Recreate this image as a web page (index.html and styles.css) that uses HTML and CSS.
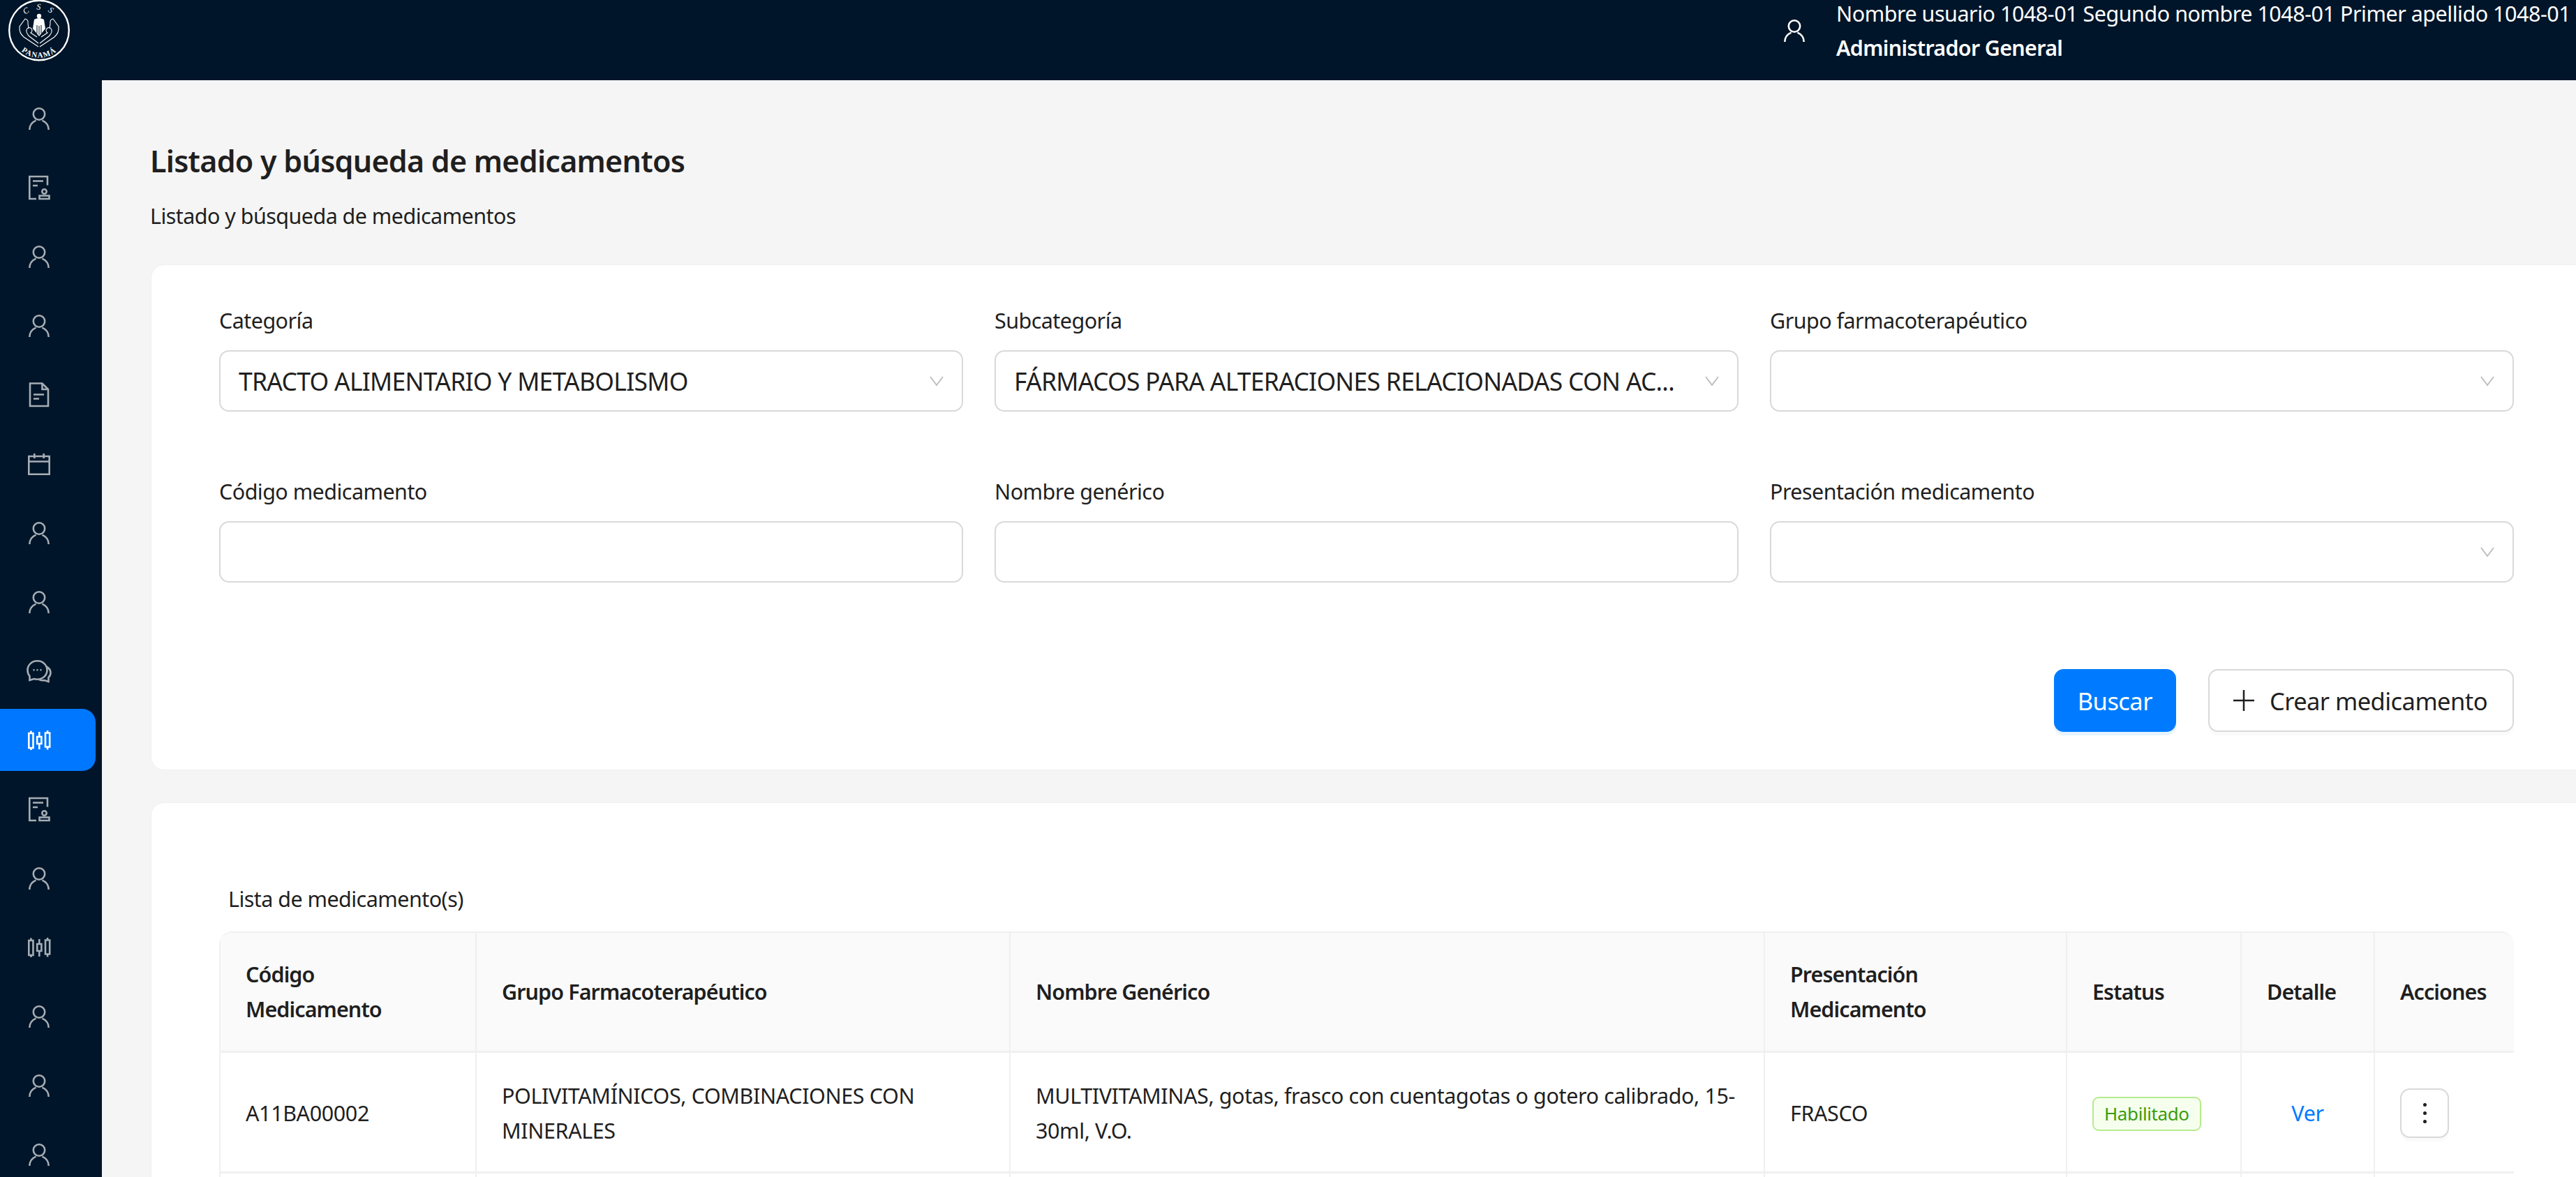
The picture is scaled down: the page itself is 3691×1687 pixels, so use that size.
FILE: index.html
```html
<!DOCTYPE html>
<html lang="es">
    <head>
        <meta charset="utf-8">
        <title>Listado y búsqueda de medicamentos</title>
        <link rel="stylesheet" href="styles.css">
    </head>
    <body>
        <svg class="icon-defs" aria-hidden="true">
            <symbol id="i-user" viewBox="0 0 36 36">
                <circle cx="18" cy="11.5" r="8.2"/>
                <path d="M4.3 34c0-6.4 3.8-11 9.2-13.4M31.7 34c0-6.4-3.8-11-9.2-13.4"/>
            </symbol>
            <symbol id="i-stamp" viewBox="0 0 36 36">
                <path d="M30 14.5V2H4.3v32H14M9 8.5h15M9 15h7"/>
                <circle cx="25.5" cy="23.5" r="3.2"/>
                <path d="M18.5 29.5h14V34h-14z"/>
            </symbol>
            <symbol id="i-doc" viewBox="0 0 36 36">
                <path d="M5 1.5h17.5L31 10v24H5zM22.5 1.5V10H31M10 17.5h15M10 23.5h8"/>
            </symbol>
            <symbol id="i-calendar" viewBox="0 0 36 36">
                <path d="M3.3 7h29.4v25.7H3.3zM3.3 14.5h29.4M11.3 3v7M24.7 3v7"/>
            </symbol>
            <symbol id="i-chat" viewBox="0 0 36 36">
                <path d="M4.5 31V25C2.5 22.7 1.5 19.8 1.5 16.5 1.5 9 7.7 3.3 15.5 3.3S29.5 9 29.5 16.5 23.3 29.7 15.5 29.7c-1.7 0-3.4-.3-5-.7z"/>
                <path d="M28.5 11.5c3.7 2 6 5 6 8.7 0 2.8-1 5-3 6.8v6l-6-2c-2.5.5-4.5.4-7-.7"/>
                <path class="dots" d="M9.5 16.3h2M14.5 16.3h2M19.5 16.3h2"/>
            </symbol>
            <symbol id="i-sliders" viewBox="0 0 36 36">
                <path d="M3.3 8h6.2v21H3.3zM6.4 4.5V8M6.4 29v3M15.2 13h6.2v10h-6.2zM18.3 6v7M18.3 23v8M27 7.5h6.2v20H27zM30.1 4v3.5M30.1 27.5v4"/>
            </symbol>
        </svg>

        <header class="topbar">
            <svg class="logo" viewBox="0 0 88 88" role="img" aria-label="CSS Panamá">
                <defs>
                    <path id="logo-top" d="M19 28A29 29 0 0 1 69 28"/>
                    <path id="logo-bottom" d="M7 56A39 39 0 0 0 81 56"/>
                </defs>
                <circle class="logo-ring" cx="44" cy="43.5" r="42.8"/>
                <text class="logo-css"><textPath href="#logo-top" startOffset="50%" text-anchor="middle">C S S</textPath></text>
                <text class="logo-pan"><textPath href="#logo-bottom" startOffset="50%" text-anchor="middle">PANAMÁ</textPath></text>
                <g class="logo-hand">
                    <path d="M43 67 22 53Q15 47 16 38L24 27Q29 28 28 34L29 41"/>
                    <path d="M43 62 30 52Q25 47 26 43A4 4 0 1 1 32 47L41 53"/>
                </g>
                <g class="logo-hand logo-hand-r">
                    <path d="M43 67 22 53Q15 47 16 38L24 27Q29 28 28 34L29 41"/>
                    <path d="M43 62 30 52Q25 47 26 43A4 4 0 1 1 32 47L41 53"/>
                </g>
                <circle class="logo-fam" cx="44" cy="23" r="3.2"/>
                <path class="logo-fam" d="M37 28Q44 24 51 28L53 41 44 52 35 41z"/>
                <path class="logo-cut" d="M41 36v12M44 37v13M47 36v12"/>
            </svg>
            <div class="user-box">
                <svg class="user-icon"><use href="#i-user"/></svg>
                <div class="user-text">
                    <div>Nombre usuario 1048-01 Segundo nombre 1048-01 Primer apellido 1048-01</div>
                    <div class="user-role">Administrador General</div>
                </div>
            </div>
        </header>

        <div class="layout">
            <nav class="sidebar">
                <a class="nav-item"><svg><use href="#i-user"/></svg></a>
                <a class="nav-item"><svg><use href="#i-stamp"/></svg></a>
                <a class="nav-item"><svg><use href="#i-user"/></svg></a>
                <a class="nav-item"><svg><use href="#i-user"/></svg></a>
                <a class="nav-item"><svg><use href="#i-doc"/></svg></a>
                <a class="nav-item"><svg><use href="#i-calendar"/></svg></a>
                <a class="nav-item"><svg><use href="#i-user"/></svg></a>
                <a class="nav-item"><svg><use href="#i-user"/></svg></a>
                <a class="nav-item"><svg><use href="#i-chat"/></svg></a>
                <a class="nav-item active"><svg><use href="#i-sliders"/></svg></a>
                <a class="nav-item"><svg><use href="#i-stamp"/></svg></a>
                <a class="nav-item"><svg><use href="#i-user"/></svg></a>
                <a class="nav-item"><svg><use href="#i-sliders"/></svg></a>
                <a class="nav-item"><svg><use href="#i-user"/></svg></a>
                <a class="nav-item"><svg><use href="#i-user"/></svg></a>
                <a class="nav-item"><svg><use href="#i-user"/></svg></a>
            </nav>

            <main class="page-content">
                <h1>Listado y búsqueda de medicamentos</h1>
                <p class="subtitle">Listado y búsqueda de medicamentos</p>

                <section class="card search-card">
                    <div class="form-grid">
                        <div class="field">
                            <label>Categoría</label>
                            <div class="select">
                                <span class="select-value">TRACTO ALIMENTARIO Y METABOLISMO</span>
                                <svg class="chevron" viewBox="0 0 20 14"><path d="M1 1l9 12 9-12"/></svg>
                            </div>
                        </div>
                        <div class="field">
                            <label>Subcategoría</label>
                            <div class="select">
                                <span class="select-value">FÁRMACOS PARA ALTERACIONES RELACIONADAS CON AC...</span>
                                <svg class="chevron" viewBox="0 0 20 14"><path d="M1 1l9 12 9-12"/></svg>
                            </div>
                        </div>
                        <div class="field">
                            <label>Grupo farmacoterapéutico</label>
                            <div class="select">
                                <span class="select-value"></span>
                                <svg class="chevron" viewBox="0 0 20 14"><path d="M1 1l9 12 9-12"/></svg>
                            </div>
                        </div>
                        <div class="field">
                            <label>Código medicamento</label>
                            <input type="text" class="text-input">
                        </div>
                        <div class="field">
                            <label>Nombre genérico</label>
                            <input type="text" class="text-input">
                        </div>
                        <div class="field">
                            <label>Presentación medicamento</label>
                            <div class="select">
                                <span class="select-value"></span>
                                <svg class="chevron" viewBox="0 0 20 14"><path d="M1 1l9 12 9-12"/></svg>
                            </div>
                        </div>
                    </div>
                    <div class="form-actions">
                        <button class="btn btn-primary">Buscar</button>
                        <button class="btn btn-default">
                            <svg class="plus" viewBox="0 0 30 30"><path d="M15 0v30M0 15h30"/></svg>
                            Crear medicamento
                        </button>
                    </div>
                </section>

                <section class="card list-card">
                    <h2>Lista de medicamento(s)</h2>
                    <div class="table-wrap">
                        <table>
                            <colgroup>
                                <col class="col-code">
                                <col class="col-group">
                                <col class="col-name">
                                <col class="col-pres">
                                <col class="col-status">
                                <col class="col-detail">
                                <col class="col-actions">
                            </colgroup>
                            <thead>
                                <tr>
                                    <th>Código Medicamento</th>
                                    <th>Grupo Farmacoterapéutico</th>
                                    <th>Nombre Genérico</th>
                                    <th>Presentación Medicamento</th>
                                    <th>Estatus</th>
                                    <th>Detalle</th>
                                    <th>Acciones</th>
                                </tr>
                            </thead>
                            <tbody>
                                <tr>
                                    <td>A11BA00002</td>
                                    <td>POLIVITAMÍNICOS, COMBINACIONES CON MINERALES</td>
                                    <td>MULTIVITAMINAS, gotas, frasco con cuentagotas o gotero calibrado, 15-30ml, V.O.</td>
                                    <td>FRASCO</td>
                                    <td><span class="tag">Habilitado</span></td>
                                    <td class="cell-center"><a class="link">Ver</a></td>
                                    <td>
                                        <button class="kebab" aria-label="Acciones"><i></i><i></i><i></i></button>
                                    </td>
                                </tr>
                                <tr class="next-row">
                                    <td></td><td></td><td></td><td></td><td></td><td></td><td></td>
                                </tr>
                            </tbody>
                        </table>
                    </div>
                </section>
            </main>
        </div>
    </body>
</html>
```

FILE: styles.css
```css
html, body {
    height: 1687px;
    overflow: hidden;
}

body {
    margin: 0;
    font-family: "Noto Sans", "Open Sans", sans-serif;
    font-size: 30.5px;
    letter-spacing: -0.018em;
    line-height: 50px;
    color: #1f1f1f;
    background-color: #f5f5f5;
}

.icon-defs {
    display: none;
}

/* shared look of the line icons */
symbol path, symbol circle {
    fill: none;
    stroke: currentColor;
    stroke-width: 2.6;
}

symbol .dots {
    stroke-width: 2.4;
}

.topbar {
    display: flex;
    align-items: flex-start;
    height: 115px;
    background-color: #001529;
    color: #fff;
}

.logo {
    flex: none;
    width: 88px;
    height: 88px;
    margin-left: 12px;
}

.logo-ring {
    fill: none;
    stroke: #fff;
    stroke-width: 2.4;
}

.logo-css {
    fill: #fff;
    font-family: "Liberation Serif", serif;
    font-size: 12px;
    font-style: italic;
    letter-spacing: 3.5px;
}

.logo-pan {
    fill: #fff;
    font-family: "Liberation Serif", serif;
    font-size: 11px;
    font-weight: bold;
    letter-spacing: 1.2px;
}

.logo-hand {
    fill: none;
    stroke: #fff;
    stroke-width: 1.1;
}

.logo-hand-r {
    transform: translateX(88px) scaleX(-1);
}

.logo-fam {
    fill: #fff;
}

.logo-cut {
    fill: none;
    stroke: #001529;
    stroke-width: 1;
}

.user-box {
    display: flex;
    align-items: center;
    flex: none;
    margin-left: 2453px;
    height: 87px;
}

.user-icon {
    flex: none;
    width: 36px;
    height: 36px;
    color: #fff;
}

.user-text {
    margin-left: 42px;
    white-space: nowrap;
    line-height: 49px;
    letter-spacing: -0.016em;
}

.user-role {
    font-weight: 600;
    letter-spacing: -0.023em;
}

.layout {
    display: flex;
    height: 1572px;
}

.sidebar {
    flex: none;
    display: flex;
    flex-direction: column;
    gap: 10px;
    width: 146px;
    padding-top: 10px;
    background-color: #001529;
    color: #a6adb4;
    box-sizing: border-box;
}

.nav-item {
    display: flex;
    align-items: center;
    justify-content: center;
    flex: none;
    width: 112px;
    height: 89px;
}

.nav-item svg {
    width: 36px;
    height: 36px;
}

.nav-item.active {
    width: 137px;
    padding-right: 25px;
    box-sizing: border-box;
    border-radius: 0 19px 19px 0;
    background-color: #0077ff;
    color: #fff;
}

.page-content {
    flex: none;
    width: 3486px;
    margin-left: 70px;
    padding-top: 84px;
}

h1 {
    margin: 0 0 0 -1px;
    font-size: 43px;
    font-weight: 600;
    letter-spacing: -0.0175em;
    line-height: 64px;
}

.subtitle {
    margin: 21px 0 45px -1px;
}

.card {
    background-color: #fff;
    border: 1px solid #f0f0f0;
    border-radius: 19px 0 0 19px;
    box-sizing: border-box;
    padding: 54px 99px 54px 97px;
}

.form-grid {
    display: grid;
    grid-template-columns: repeat(3, 1fr);
    column-gap: 45px;
    row-gap: 89px;
}

.field label {
    display: block;
    margin-bottom: 18px;
}

.select, .text-input {
    display: flex;
    align-items: center;
    width: 100%;
    height: 88px;
    padding: 0 26px;
    box-sizing: border-box;
    background-color: #fff;
    border: 2px solid #d9d9d9;
    border-radius: 14px;
    font-family: inherit;
    font-size: 35.5px;
    letter-spacing: -0.021em;
}

.select-value {
    flex: 1;
    min-width: 0;
    white-space: nowrap;
    overflow: hidden;
}

.chevron {
    flex: none;
    width: 20px;
    height: 14px;
    margin-left: 12px;
    fill: none;
    stroke: #bfbfbf;
    stroke-width: 2;
}

.form-actions {
    display: flex;
    justify-content: flex-end;
    gap: 46px;
    margin-top: 124px;
}

.btn {
    display: flex;
    align-items: center;
    height: 90px;
    padding: 0 34px;
    border-radius: 14px;
    font-family: inherit;
    font-size: 34.5px;
    letter-spacing: -0.016em;
    box-sizing: border-box;
}

.btn-primary {
    background-color: #007bff;
    border: none;
    color: #fff;
    box-shadow: 0 5px 0 #e6f4ff;
}

.btn-default {
    padding-right: 36px;
    background-color: #fff;
    border: 2px solid #d9d9d9;
    color: #1f1f1f;
    box-shadow: 0 5px 0 rgba(0, 0, 0, 0.02);
}

.plus {
    width: 30px;
    height: 30px;
    margin-right: 22px;
    fill: none;
    stroke: #1f1f1f;
    stroke-width: 2.5;
}

.list-card {
    margin-top: 46px;
    padding-top: 112px;
}

h2 {
    margin: 0 0 22px 13px;
    font-size: 30.5px;
    font-weight: 400;
    line-height: 50px;
}

.table-wrap {
    border-top: 2px solid #f0f0f0;
    border-radius: 19px 19px 0 0;
    overflow: hidden;
}

table {
    width: 3288px;
    table-layout: fixed;
    border-collapse: collapse;
}

.col-code { width: 367px; }
.col-group { width: 765px; }
.col-name { width: 1081px; }
.col-pres { width: 433px; }
.col-status { width: 250px; }
.col-detail { width: 191px; }
.col-actions { width: 201px; }

th, td {
    padding: 0 36px;
    border: 2px solid #f0f0f0;
    border-top: none;
    text-align: left;
    vertical-align: middle;
}

thead tr {
    height: 170px;
}

th {
    background-color: #fafafa;
    font-weight: 600;
    letter-spacing: -0.03em;
    border-bottom-width: 3px;
}

tbody tr {
    height: 173px;
}

tbody td {
    padding-top: 3px;
    border-bottom-width: 3px;
    letter-spacing: -0.013em;
}

.cell-center {
    text-align: center;
}

.link {
    color: #007bff;
}

.tag {
    display: inline-block;
    height: 49px;
    padding: 0 15px;
    box-sizing: border-box;
    background-color: #f6ffed;
    border: 2px solid #b7eb8f;
    border-radius: 9px;
    color: #389e0d;
    font-size: 26px;
    line-height: 45px;
}

.kebab {
    display: flex;
    flex-direction: column;
    align-items: center;
    justify-content: center;
    gap: 7px;
    width: 70px;
    height: 71px;
    padding: 0;
    background-color: #fff;
    border: 2px solid #d9d9d9;
    border-radius: 14px;
    box-shadow: 0 5px 0 rgba(0, 0, 0, 0.02);
}

.kebab i {
    width: 5px;
    height: 5px;
    border-radius: 50%;
    background-color: #1f1f1f;
}
```
